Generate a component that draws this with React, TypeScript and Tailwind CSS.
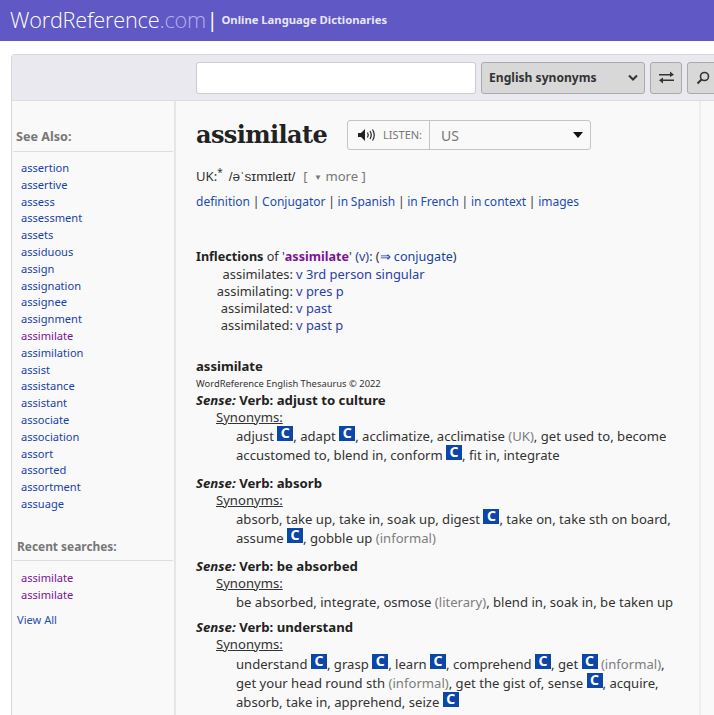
import { ReactNode } from "react";

const seeAlso = [
  "assertion", "assertive", "assess", "assessment", "assets", "assiduous", "assign", "assignation", "assignee",
  "assignment", "assimilate", "assimilation", "assist", "assistance", "assistant", "associate", "association",
  "assort", "assorted", "assortment", "assuage",
];

const inflections = [
  ["assimilates:", "v 3rd person singular"],
  ["assimilating:", "v pres p"],
  ["assimilated:", "v past"],
  ["assimilated:", "v past p"],
];

// blue collocation badge
function C() {
  return (
    <span className="inline-flex w-[16px] h-[15px] -my-[4px] bg-[#0b46a8] text-white text-[14px] font-bold items-center justify-center align-[3px] leading-none">
      C
    </span>
  );
}

function Gray({ children }: { children: ReactNode }) {
  return <span className="text-[#7d7d7d]">{children}</span>;
}

function Sense({ title, lines, className, lineClass }: { title: string; lines: ReactNode[]; className: string; lineClass: string }) {
  return (
    <div className={className}>
      <div className="text-[#222] font-bold leading-[16px] text-[13.2px]">
        <i>Sense:</i> Verb: {title}
      </div>
      <div className="pl-[20px] underline leading-[18px] mb-[1px]">Synonyms:</div>
      <div className="pl-[40px]">
        {lines.map((line, i) => (
          <div key={i} className={`${lineClass} whitespace-nowrap`}>
            {line}
          </div>
        ))}
      </div>
    </div>
  );
}

export default function App() {
  return (
    <div className="h-[715px] w-[714px] overflow-hidden bg-white text-[#333] text-[13.1px] font-['Noto_Sans','Open_Sans',sans-serif]">
      {/* Header */}
      <div className="h-[41px] bg-[#5f58c5] flex items-center pl-[10px] text-white whitespace-nowrap">
        <span className="text-[21.7px] font-['Open_Sans',sans-serif] font-light tracking-[-0.2px]">
          WordReference<span className="text-[#b4b0f0]">.com</span>
        </span>
        <span className="text-[19px] ml-[1px]">|</span>
        <span className="text-[11.25px] font-bold ml-[4px] text-[#e8e7fa]">Online Language Dictionaries</span>
      </div>

      {/* Panel */}
      <div className="mt-[13px] ml-[11px] border border-[#d8d8d8] rounded-tl-[4px] border-r-0 bg-[#f9f9f9]">
        <div className="h-[46px] bg-[#e9e9ef] border-b border-[#dcdcdc] flex items-center pl-[184px] gap-[5px] overflow-hidden">
          <input className="w-[280px] h-[32px] bg-white border border-[#ccc] rounded-[3px] shrink-0" />
          <div className="w-[164px] h-[32px] bg-[#d8d8d8] border border-[#aaa] rounded-[3px] shrink-0 flex items-center justify-between pl-[7px] pr-[5px] pt-[1px] text-[12.1px] font-bold text-[#333]">
            English synonyms
            <svg width="12" height="8" viewBox="0 0 12 8" fill="none" stroke="#333" strokeWidth="2">
              <path d="M2 1.500l4 4 4-4" />
            </svg>
          </div>
          <div className="w-[32px] h-[32px] bg-[#d8d8d8] border border-[#aaa] rounded-[3px] shrink-0 flex items-center justify-center">
            <svg width="15" height="13" viewBox="0 0 15 13" fill="#333">
              <path d="M0 3h11V0.500L15 3.800 11 6V4.500H0z" />
              <path d="M15 8.500H4V6.500L0 9.200 4 12.500V10h11z" />
            </svg>
          </div>
          <div className="w-[32px] h-[32px] bg-[#d8d8d8] border border-[#aaa] rounded-[3px] shrink-0 flex items-center pl-[8px]">
            <svg width="14" height="14" viewBox="0 0 14 14" fill="none" stroke="#333" strokeWidth="1.600">
              <circle cx="8.500" cy="5.500" r="4" />
              <path d="M5.500 8.500L1.500 12.500" strokeWidth="2" />
            </svg>
          </div>
        </div>

        <div className="flex h-[620px]">
          {/* Sidebar */}
          <div className="w-[164px] shrink-0 border-r-2 border-[#e6e6e6] pt-[27px] pl-[1px] pr-[1px] text-[11.1px]">
            <div className="pl-[3px] font-bold text-[#777] text-[12.6px] leading-[18px] pb-[5px] border-b border-[#ddd]">
              See Also:
            </div>
            <div className="pl-[8px] mt-[8px] leading-[16.8px]">
              {seeAlso.map((w) => (
                <div key={w} className={w === "assimilate" ? "text-[#7b1398]" : "text-[#1a3fa8]"}>
                  {w}
                </div>
              ))}
            </div>
            <div className="mt-[24px] pl-[4px] font-bold text-[#777] text-[11.9px] leading-[18px] pb-[5px] border-b border-[#ddd]">
              Recent searches:
            </div>
            <div className="pl-[8px] mt-[9px] leading-[16.8px] text-[#7b1398]">
              <div>assimilate</div>
              <div>assimilate</div>
            </div>
            <div className="pl-[4px] mt-[9px] leading-[16.8px] text-[#2a50b0]">View All</div>
          </div>

          {/* Main */}
          <div className="w-[525px] shrink-0 pl-[20px] pt-[19px] border-r-2 border-[#eeeeee]">
            <div className="flex items-center h-[30px]">
              <h1 className="w-[151px] text-[24px] font-bold text-[#222] font-['DejaVu_Serif',serif] tracking-[-0.6px] leading-none">
                assimilate
              </h1>
              <div className="w-[244px] h-[30px] border border-[#c4c4c4] rounded-[3px] flex items-center text-[#777]">
                <div className="w-[82px] h-full border-r border-[#c4c4c4] flex items-center pl-[10px] gap-[5px] text-[11px]">
                  <svg width="20" height="12" viewBox="0 0 20 12" fill="#222">
                    <path d="M0 4h3l4-4v12l-4-4H0z" />
                    <path d="M9.500 3.500q1.500 2.500 0 5M12 2q2.500 4 0 8M14.500 0.500q3.500 5.500 0 11" fill="none" stroke="#222" strokeWidth="1.200" />
                  </svg>
                  LISTEN:
                </div>
                <span className="pl-[11px] text-[14px] flex-1">US</span>
                <svg className="mr-[7px]" width="10" height="6" viewBox="0 0 10 6" fill="#111">
                  <path d="M0 0h10L5 6z" />
                </svg>
              </div>
            </div>

            <div className="mt-[16px] leading-[20px] h-[20px] whitespace-nowrap">
              UK:<sup className="text-[10px]">*</sup>
              <span className="ml-[6px] font-['Liberation_Sans',sans-serif] text-[13.6px]">/əˈsɪmɪleɪt/</span>
              <span className="ml-[8px] text-[#777]">
                [ <span className="text-[8px] align-[1px] ml-[3px]">▼</span> more ]
              </span>
            </div>
            <div className="mt-[6px] leading-[20px] text-[12px] text-[#1a4db0] whitespace-nowrap [word-spacing:-0.4px]">
              definition <span className="text-[#333]">|</span> Conjugator <span className="text-[#333]">|</span> in Spanish{" "}
              <span className="text-[#333]">|</span> in French <span className="text-[#333]">|</span> in context{" "}
              <span className="text-[#333]">|</span> images
            </div>

            <div className="mt-[36px] leading-[18px] text-[12.6px] whitespace-nowrap">
              <b className="text-[#222]">Inflections</b> of '<b className="text-[#7b1398]">assimilate</b>'{" "}
              <span className="text-[#2a3fa0]">(v)</span>: (<span className="text-[#1a3fa8]">⇒ conjugate</span>)
            </div>
            <div className="leading-[17px] text-[12.9px]">
              {inflections.map(([form, tag], i) => (
                <div key={i} className="flex">
                  <span className="w-[97px] text-right">{form}</span>
                  <span className="ml-[3px] text-[#2a3fa8]">{tag}</span>
                </div>
              ))}
            </div>

            <div className="mt-[23px] font-bold text-[#222] leading-[18px]">assimilate</div>
            <div className="text-[9.400px] leading-[12px] mt-[3px] h-[14px]">WordReference English Thesaurus © 2022</div>

            <Sense
              className=""
              lineClass="leading-[19px]"
              title="adjust to culture"
              lines={[
                <>adjust <C />, adapt <C />, acclimatize, acclimatise <Gray>(UK)</Gray>, get used to, become</>,
                <>accustomed to, blend in, conform <C />, fit in, integrate</>,
              ]}
            />
            <Sense
              className="mt-[10px]"
              lineClass="leading-[19px]"
              title="absorb"
              lines={[
                <>absorb, take up, take in, soak up, digest <C />, take on, take sth on board,</>,
                <>assume <C />, gobble up <Gray>(informal)</Gray></>,
              ]}
            />
            <Sense
              className="mt-[10px]"
              lineClass="leading-[18px]"
              title="be absorbed"
              lines={[
                <>be absorbed, integrate, osmose <Gray>(literary)</Gray>, blend in, soak in, be taken up</>,
              ]}
            />
            <Sense
              className="mt-[8px]"
              lineClass="leading-[19px] first:pt-[1px]"
              title="understand"
              lines={[
                <>understand <C />, grasp <C />, learn <C />, comprehend <C />, get <C /> <Gray>(informal)</Gray>,</>,
                <>get your head round sth <Gray>(informal)</Gray>, get the gist of, sense <C />, acquire,</>,
                <>absorb, take in, apprehend, seize <C /></>,
              ]}
            />
          </div>
        </div>
      </div>
    </div>
  );
}
